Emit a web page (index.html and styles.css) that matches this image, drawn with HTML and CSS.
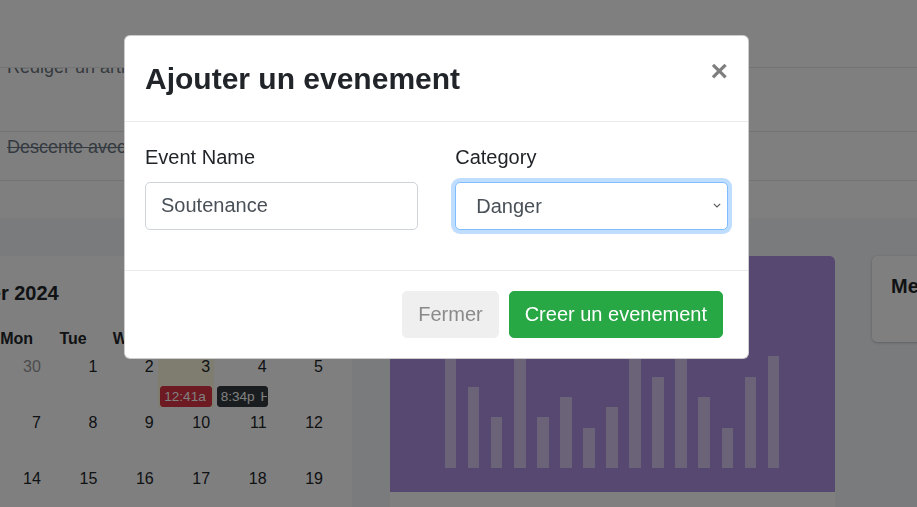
FILE: index.html
```html
<!DOCTYPE html>
<html lang="fr">
<head>
<meta charset="utf-8">
<title>Tableau de bord</title>
<link rel="stylesheet" href="styles.css">
</head>
<body>
<div class="page">
  <section class="todo-card">
    <div class="todo-head"></div>
    <ul class="todo-list">
      <li class="todo-item first"><span class="text">Rédiger un article sur le projet</span></li>
      <li class="todo-item done"><span class="text">Descente avec l'équipe technique</span></li>
    </ul>
  </section>

  <div class="cards-row">
    <section class="card calendar-card">
      <div class="fc-toolbar"><h2 class="fc-title">October 2024</h2></div>
      <div class="fc-grid">
        <div class="fc-colhead">Sun</div>
        <div class="fc-colhead">Mon</div>
        <div class="fc-colhead">Tue</div>
        <div class="fc-colhead">Wed</div>
        <div class="fc-colhead">Thu</div>
        <div class="fc-colhead">Fri</div>
        <div class="fc-colhead">Sat</div>

        <div class="fc-day other"><div class="fc-num">29</div></div>
        <div class="fc-day other"><div class="fc-num">30</div></div>
        <div class="fc-day"><div class="fc-num">1</div></div>
        <div class="fc-day"><div class="fc-num">2</div></div>
        <div class="fc-day today"><div class="fc-num">3</div><div class="fc-event danger">12:41a</div></div>
        <div class="fc-day"><div class="fc-num">4</div><div class="fc-event dark">8:34p <span class="ev-title">HackDay</span></div></div>
        <div class="fc-day"><div class="fc-num">5</div></div>

        <div class="fc-day"><div class="fc-num">6</div></div>
        <div class="fc-day"><div class="fc-num">7</div></div>
        <div class="fc-day"><div class="fc-num">8</div></div>
        <div class="fc-day"><div class="fc-num">9</div></div>
        <div class="fc-day"><div class="fc-num">10</div></div>
        <div class="fc-day"><div class="fc-num">11</div></div>
        <div class="fc-day"><div class="fc-num">12</div></div>

        <div class="fc-day"><div class="fc-num">13</div></div>
        <div class="fc-day"><div class="fc-num">14</div></div>
        <div class="fc-day"><div class="fc-num">15</div></div>
        <div class="fc-day"><div class="fc-num">16</div></div>
        <div class="fc-day"><div class="fc-num">17</div></div>
        <div class="fc-day"><div class="fc-num">18</div></div>
        <div class="fc-day"><div class="fc-num">19</div></div>
      </div>
    </section>

    <section class="card chart-card">
      <div class="chart-head">
        <div class="bar" style="height:122px"></div>
        <div class="bar" style="height:81px"></div>
        <div class="bar" style="height:51px"></div>
        <div class="bar" style="height:112px"></div>
        <div class="bar" style="height:51px"></div>
        <div class="bar" style="height:71px"></div>
        <div class="bar" style="height:40px"></div>
        <div class="bar" style="height:61px"></div>
        <div class="bar" style="height:122px"></div>
        <div class="bar" style="height:91px"></div>
        <div class="bar" style="height:112px"></div>
        <div class="bar" style="height:71px"></div>
        <div class="bar" style="height:40px"></div>
        <div class="bar" style="height:91px"></div>
        <div class="bar" style="height:112px"></div>
      </div>
      <div class="chart-body"></div>
    </section>

    <section class="card side-card">
      <h3 class="side-title">Messages</h3>
    </section>
  </div>
</div>

<div class="backdrop"></div>

<div class="modal">
  <div class="modal-header">
    <h4 class="modal-title">Ajouter un evenement</h4>
    <button class="close" type="button">×</button>
  </div>
  <div class="modal-body">
    <div class="form-row">
      <div class="form-group">
        <label class="form-label">Event Name</label>
        <input class="form-control" type="text" value="Soutenance">
      </div>
      <div class="form-group">
        <label class="form-label">Category</label>
        <div class="select-wrap">
          <select class="form-control select is-focused">
            <option>Danger</option>
            <option>Success</option>
            <option>Primary</option>
          </select>
          <svg class="select-arrow" width="8" height="5" viewBox="0 0 8 5" aria-hidden="true"><path d="M0.8 0.8 L4 4 L7.2 0.8" fill="none" stroke="#555" stroke-width="1.1"/></svg>
        </div>
      </div>
    </div>
  </div>
  <div class="modal-footer">
    <button class="btn btn-light" type="button">Fermer</button>
    <button class="btn btn-success" type="button">Creer un evenement</button>
  </div>
</div>
</body>
</html>
```

FILE: styles.css
```css
html {
  font-size: 20px;
}

body {
  margin: 0;
  width: 917px;
  height: 507px;
  overflow: hidden;
  font-family: "Liberation Sans", Arial, sans-serif;
  color: #212529;
  background: #f4f6f9;
}

.page {
  width: 917px;
}

/* ---- top todo card ---- */
.todo-card {
  background: #fff;
  height: 218px;
}

.todo-head {
  height: 67px;
  border-bottom: 1px solid #e6e8eb;
}

.todo-list {
  list-style: none;
  margin: 0;
  padding: 0;
}

.todo-item {
  overflow: hidden;
  padding-left: 7px;
  font-size: 18px;
  line-height: 27px;
  color: #6c757d;
  border-bottom: 1px solid #e6e8eb;
  white-space: nowrap;
}

.todo-item .text {
  display: block;
}

.todo-item.first {
  height: 63px;
}

.todo-item.first .text {
  margin-top: -14px;
}

.todo-item.done {
  height: 48px;
}

.todo-item.done .text {
  margin-top: 1.5px;
  text-decoration: line-through;
  color: #697582;
}

/* ---- cards row ---- */
.cards-row {
  display: flex;
  align-items: flex-start;
  gap: 37.5px;
  margin-top: 38px;
  margin-left: -93px;
}

.card {
  flex: 0 0 445px;
  box-sizing: border-box;
  background: #fff;
  border-radius: 5px;
}

/* calendar */
.calendar-card {
  padding: 25px;
  height: 300px;
  overflow: hidden;
}

.fc-toolbar {
  display: flex;
  height: 24px;
  margin-bottom: 22px;
}

.fc-title {
  margin: 0;
  font-size: 20px;
  line-height: 24px;
  font-weight: 700;
  white-space: nowrap;
}

.fc-grid {
  display: grid;
  grid-template-columns: repeat(7, 1fr);
}

.fc-colhead {
  text-align: center;
  font-size: 16px;
  line-height: 24px;
  font-weight: 700;
}

.fc-day {
  min-height: 56px;
  min-width: 0;
}

.fc-day.today {
  background: rgba(255, 220, 40, .15);
}

.fc-num {
  text-align: right;
  padding: 4px;
  font-size: 16px;
  line-height: 24px;
}

.fc-day.other .fc-num {
  color: #9a9a9a;
}

.fc-event {
  margin: 3px 2.5px 0;
  padding: 0 3px;
  border: 1px solid;
  border-radius: 3px;
  font-size: 13.6px;
  line-height: 19px;
  color: #fff;
  white-space: nowrap;
  overflow: hidden;
}

.fc-event.danger {
  background: #dc3545;
  border-color: #dc3545;
}

.fc-event.dark {
  background: #343a40;
  border-color: #343a40;
}

.ev-title {
  margin-left: 2px;
}

/* chart card */
.chart-card {
  overflow: hidden;
}

.chart-head {
  display: flex;
  align-items: flex-end;
  justify-content: center;
  gap: 11.4px;
  box-sizing: border-box;
  height: 236px;
  padding-bottom: 24.3px;
  background: #ae90e4;
  border-radius: 5px 5px 0 0;
}

.bar {
  width: 11.7px;
  background: rgba(255, 255, 255, .5);
}

.chart-body {
  height: 60px;
}

/* side card */
.side-card {
  min-height: 86px;
  padding: 18px 20px 18px 19px;
  box-shadow: 0 0 1px rgba(0, 0, 0, .125), 0 1px 3px rgba(0, 0, 0, .2);
}

.side-title {
  margin: 0;
  font-size: 20px;
  line-height: 24px;
  font-weight: 700;
  white-space: nowrap;
}

/* ---- modal ---- */
.backdrop {
  position: fixed;
  inset: 0;
  background: rgba(0, 0, 0, .5);
}

.modal {
  position: fixed;
  top: 35px;
  left: 124px;
  width: 625px;
  box-sizing: border-box;
  background: #fff;
  border: 1px solid rgba(0, 0, 0, .2);
  border-radius: 6px;
}

.modal-header {
  display: flex;
  align-items: flex-start;
  padding: 20px;
  border-bottom: 1px solid #e9ecef;
}

.modal-title {
  margin: 0;
  font-size: 30px;
  line-height: 1.5;
  font-weight: 700;
  color: #212529;
}

.close {
  margin: -20px -20px -20px auto;
  padding: 20px;
  background: none;
  border: 0;
  font-family: inherit;
  font-size: 30px;
  font-weight: 700;
  line-height: 1;
  color: #000;
  opacity: .5;
  text-shadow: 0 1px 0 #fff;
}

.modal-body {
  padding: 20px;
}

.form-row {
  display: grid;
  grid-template-columns: 1fr 1fr;
  column-gap: 37.5px;
}

.form-group {
  margin-bottom: 20px;
  min-width: 0;
}

.form-label {
  display: inline-block;
  margin-bottom: 10px;
  font-size: 20px;
  line-height: 30px;
}

.form-control {
  display: block;
  width: 100%;
  box-sizing: border-box;
  height: 47.5px;
  padding: 7.5px 15px;
  font-family: inherit;
  font-size: 20px;
  line-height: 1.5;
  color: #495057;
  background: #fff;
  border: 1px solid #ced4da;
  border-radius: 5px;
}

.select-wrap {
  position: relative;
}

.form-control.select {
  appearance: none;
  -webkit-appearance: none;
  padding-left: 20px;
  padding-right: 30px;
}

.select-arrow {
  position: absolute;
  right: 7px;
  top: 21px;
}

.form-control.is-focused {
  border-color: #80bdff;
  outline: 0;
  box-shadow: 0 0 0 4px rgba(0, 123, 255, .25);
}

.modal-footer {
  display: flex;
  justify-content: flex-end;
  align-items: center;
  padding: 15px 20px;
  border-top: 1px solid #e9ecef;
}

.btn {
  margin: 5px;
  padding: 7.5px 15px;
  font-family: inherit;
  font-size: 20px;
  line-height: 1.5;
  border: 1px solid transparent;
  border-radius: 5px;
}

.btn-light {
  background: #efefef;
  border-color: #efefef;
  color: #8a8a8a;
}

.btn-success {
  background: #28a745;
  border-color: #28a745;
  color: #fff;
}
```
